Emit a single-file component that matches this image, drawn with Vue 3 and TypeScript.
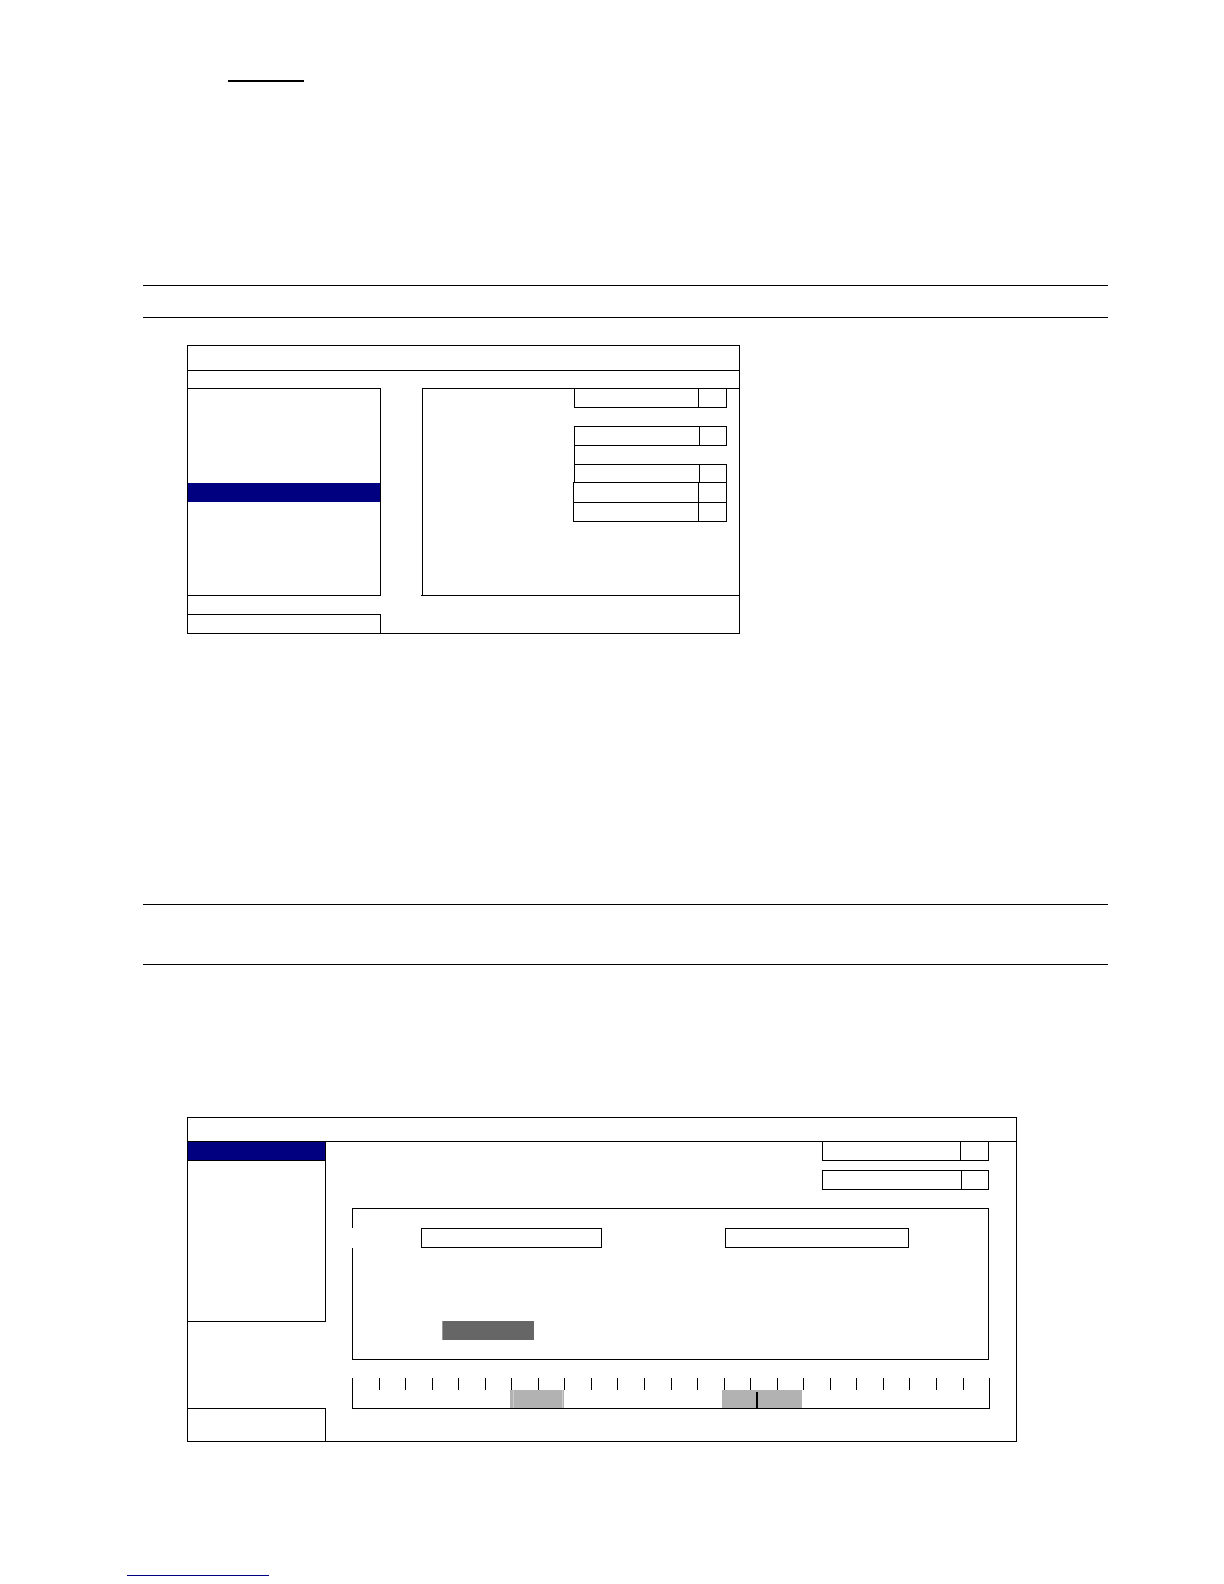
<script setup lang="ts">
interface Field {
  name: string
  kind: string
}

interface Segment {
  span: number
  kind: 'gap' | 'framed' | 'plain'
}

const setupItems = Array.from({ length: 11 }, (_, i) => ({ id: i, selected: i === 5 }))
const searchItems = Array.from({ length: 9 }, (_, i) => ({ id: i, selected: i === 0 }))

const setupFields: Field[] = [
  { name: 'Option 1', kind: 'hung' },
  { name: 'Option 2', kind: 'boxed narrow' },
  { name: 'Option 3', kind: 'open narrow' },
  { name: 'Option 4', kind: 'wide' },
  { name: 'Option 5', kind: 'wide hung' },
]

const searchFields: Field[] = [
  { name: 'Filter 1', kind: 'hung' },
  { name: 'Filter 2', kind: 'boxed narrow' },
]

const segments: Segment[] = [
  { span: 157, kind: 'gap' },
  { span: 54, kind: 'framed' },
  { span: 158, kind: 'gap' },
  { span: 80, kind: 'plain' },
  { span: 187, kind: 'gap' },
]
const total = segments.reduce((sum, s) => sum + s.span, 0)
const share = (s: Segment) => ({ width: `${(s.span / total) * 100}%` })
</script>

<template>
  <main class="page">
    <h1 class="heading"></h1>

    <section class="note short"></section>

    <section class="window setup">
      <header class="titlebar"></header>
      <div class="toolbar"></div>
      <div class="setup-body">
        <ul class="menu">
          <li v-for="item in setupItems" :key="item.id" :class="{ selected: item.selected }">
            <button type="button" :aria-label="`Menu ${item.id + 1}`"></button>
          </li>
        </ul>
        <div class="pane-base">
          <form class="pane">
            <label v-for="f in setupFields" :key="f.name" class="field" :class="f.kind">
              <select :aria-label="f.name"></select>
              <span class="caret"></span>
            </label>
          </form>
        </div>
      </div>
      <footer class="status"></footer>
    </section>

    <section class="note tall"></section>

    <section class="window search">
      <header class="titlebar"></header>
      <div class="search-body">
        <aside class="side">
          <ul class="menu">
            <li v-for="item in searchItems" :key="item.id" :class="{ selected: item.selected }">
              <button type="button" :aria-label="`List ${item.id + 1}`"></button>
            </li>
          </ul>
          <div class="side-foot"></div>
        </aside>
        <div class="content">
          <div class="filters">
            <label v-for="f in searchFields" :key="f.name" class="field" :class="f.kind">
              <select :aria-label="f.name"></select>
              <span class="caret"></span>
            </label>
          </div>
          <form class="range">
            <div class="range-head"></div>
            <div class="range-inputs">
              <input class="from" type="text" aria-label="From" />
              <input class="to" type="text" aria-label="To" />
            </div>
            <div class="range-actions">
              <button type="button" class="action" aria-label="Search"></button>
            </div>
          </form>
          <div class="ruler">
            <div class="ticks">
              <span v-for="n in 24" :key="n"></span>
            </div>
            <div class="track">
              <span v-for="(s, i) in segments" :key="i" :class="s.kind" :style="share(s)"></span>
            </div>
          </div>
        </div>
      </div>
    </section>

    <a class="link" href="#" aria-label="Website"></a>
  </main>
</template>

<style>
body {
  margin: 0;
  background: #fff;
}
</style>

<style scoped>
* {
  box-sizing: border-box;
}

.page {
  display: flex;
  flex-direction: column;
  padding: 0 116px 8px 143px;
  font-family: 'Liberation Sans', Arial, sans-serif;
  font-size: 14px;
  color: #000;
}

.heading {
  width: 76px;
  height: 82px;
  margin: 0 0 203px 85px;
  border-bottom: 2px solid #000;
}

.note {
  border: solid #000;
  border-width: 1px 0;
}

.short {
  min-height: 33px;
}

.tall {
  min-height: 61px;
}

.window {
  width: 100%;
  margin-left: 44px;
  border: 1px solid #000;
}

.setup {
  max-width: 553px;
  margin-top: 27px;
  margin-bottom: 270px;
}

.search {
  max-width: 830px;
  margin-top: 152px;
}

.titlebar {
  height: 25px;
  border-bottom: 1px solid #000;
}

.search .titlebar {
  height: 24px;
}

.toolbar {
  height: 17px;
}

.setup-body {
  display: flex;
  margin-bottom: 18px;
}

.menu {
  display: flex;
  flex-direction: column;
  margin: 0;
  padding: 0;
  list-style: none;
  border-right: 1px solid #000;
  border-bottom: 1px solid #000;
}

.setup .menu {
  width: 193px;
  border-top: 1px solid #000;
}

.menu li {
  flex: 1;
  display: flex;
}

.menu .selected {
  flex: 0 0 19px;
  background: #000080;
}

.menu button {
  flex: 1;
  padding: 0;
  border: 0;
  background: none;
}

.pane-base {
  flex: 1;
  margin-left: 40px;
  padding-left: 1px;
  border-bottom: 1px solid #000;
}

.pane {
  display: flex;
  flex-direction: column;
  align-items: flex-end;
  padding: 0 12px 73px 0;
  border-top: 1px solid #000;
  border-left: 1px solid #000;
}

.field {
  display: flex;
  width: 153px;
  height: 20px;
  border: 1px solid #000;
}

.field.hung {
  height: 19px;
  border-top: 0;
}

.pane .boxed {
  margin-top: 18px;
}

/* The third field hangs from a spacer that keeps only its left edge. */
.pane .open {
  position: relative;
  height: 18px;
  margin-top: 18px;
  border-bottom: 0;
}

.pane .open::before {
  content: '';
  position: absolute;
  left: -1px;
  bottom: 100%;
  width: 1px;
  height: 19px;
  background: #000;
}

.pane .wide {
  width: 154px;
}

.pane .wide:not(.hung) {
  height: 21px;
}

.field select {
  flex: 1;
  min-width: 0;
  padding: 0;
  border: 0;
  background: none;
  appearance: none;
}

.caret {
  width: 28px;
  border-left: 1px solid #000;
}

.narrow .caret {
  width: 27px;
}

.status {
  width: 193px;
  height: 19px;
  border: solid #000;
  border-width: 1px 1px 0 0;
}

.search-body {
  display: flex;
}

.side {
  display: flex;
  flex-direction: column;
  justify-content: space-between;
  width: 138px;
}

.side .menu {
  height: 180px;
}

.side .selected {
  border-bottom: 1px solid #000;
}

.side-foot {
  height: 33px;
  border: solid #000;
  border-width: 1px 1px 0 0;
}

.content {
  flex: 1;
  padding: 0 27px 32px 26px;
}

.filters {
  display: flex;
  flex-direction: column;
  align-items: flex-end;
  gap: 9px;
  margin-bottom: 18px;
}

.filters .field {
  width: 167px;
}

.range {
  border: solid #000;
  border-width: 1px 1px 1px 0;
}

.range-head {
  height: 19px;
  border-left: 1px solid #000;
}

.range-inputs {
  display: flex;
  gap: 123px;
  padding-left: 69px;
}

.range-inputs input {
  height: 20px;
  padding: 0 4px;
  border: 1px solid #000;
  border-radius: 0;
  background: none;
  font: inherit;
}

.from {
  width: 181px;
}

.to {
  width: 184px;
}

.range-actions {
  display: flex;
  padding: 73px 0 19px 89px;
  border-left: 1px solid #000;
}

.action {
  width: 92px;
  height: 19px;
  padding: 0;
  border: 0;
  border-left: 1px solid #999;
  background: #666;
}

.ruler {
  margin: 18px -1px 0 0;
  border: solid #000;
  border-width: 0 1px 1px;
}

.ticks {
  display: flex;
  height: 12px;
}

.ticks span {
  flex: 1;
  border-right: 1px solid #000;
}

.ticks span:last-child {
  border-right: 0;
}

.track {
  display: flex;
  height: 18px;
}

.framed,
.plain {
  position: relative;
  background: #b2b2b2;
}

.framed::before {
  content: '';
  position: absolute;
  inset: 0 1px 0 3px;
  border: solid #ccc;
  border-width: 0 1px;
}

/* Current playback position */
.plain::before {
  content: '';
  position: absolute;
  top: 2px;
  bottom: 0;
  left: 42.5%;
  width: 2px;
  background: #000;
}

.link {
  width: 142px;
  height: 20px;
  margin: 114px 0 0 -16px;
  border-bottom: 1px solid #000080;
}
</style>
